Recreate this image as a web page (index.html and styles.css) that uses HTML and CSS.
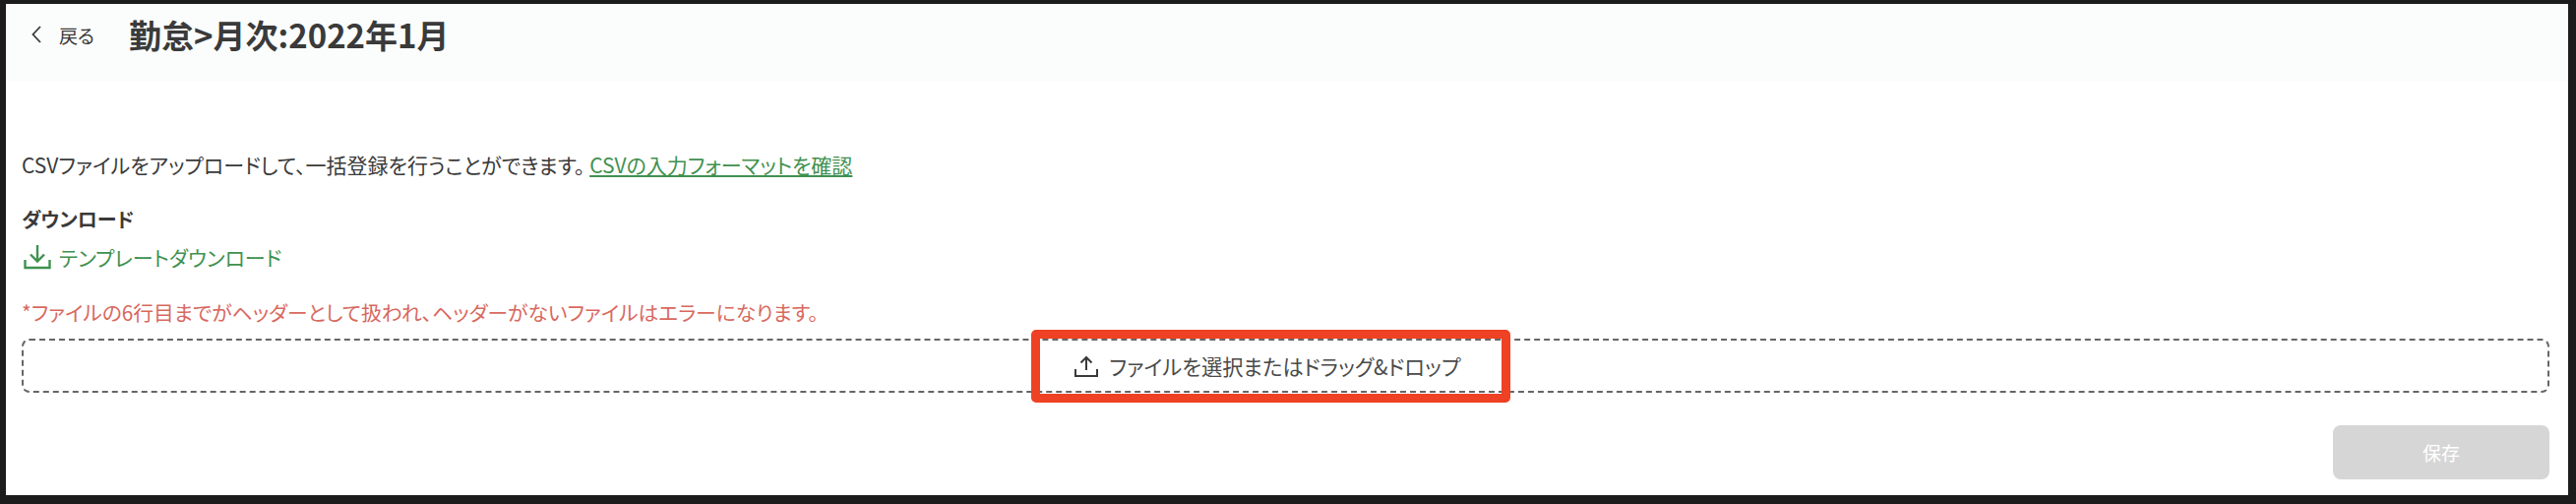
FILE: index.html
```html
<!DOCTYPE html>
<html lang="ja">
<head>
    <meta charset="UTF-8">
    <meta name="viewport" content="width=device-width, initial-scale=1.0">
    <title>勤怠&gt;月次:2022年1月</title>
    <link rel="stylesheet" href="styles.css">
</head>
<body>
    <div class="frame">
        <header class="page-header">
            <a class="back-link">
                <svg class="back-icon" viewBox="0 0 12 20" width="12" height="20" fill="none" stroke="#3a3a3a" stroke-width="1.8">
                    <path d="M10 2 L2.5 10 L10 18"/>
                </svg>
                <span>戻る</span>
            </a>
            <h1>勤怠&gt;月次:2022年1月</h1>
        </header>
        <main class="container">
            <p class="intro">CSVファイルをアップロードして、一括登録を行うことができます。<a class="format-link">CSVの入力フォーマットを確認</a></p>
            <h2>ダウンロード</h2>
            <a class="template-link">
                <svg viewBox="0 0 28 26" width="28" height="26" fill="none" stroke="#3f9150" stroke-width="2.4">
                    <path d="M14 1 V17"/>
                    <path d="M7 10.5 L14 17.5 L21 10.5"/>
                    <path d="M1.5 16 V24 H26.5 V16"/>
                </svg>
                <span>テンプレートダウンロード</span>
            </a>
            <p class="warning">*ファイルの6行目までがヘッダーとして扱われ、ヘッダーがないファイルはエラーになります。</p>
            <div class="dropzone">
                <svg viewBox="0 0 24 22" width="24" height="22" fill="none" stroke="#3a3a3a" stroke-width="2">
                    <path d="M12 15 V2"/>
                    <path d="M6.5 7.5 L12 2 L17.5 7.5"/>
                    <path d="M1 14 V21 H23 V14"/>
                </svg>
                <span>ファイルを選択またはドラッグ&amp;ドロップ</span>
                <div class="highlight"></div>
            </div>
            <div class="actions">
                <button type="button" disabled>保存</button>
            </div>
        </main>
    </div>
</body>
</html>
```

FILE: styles.css
```css
* {
    box-sizing: border-box;
}
html, body {
    margin: 0;
    padding: 0;
}
body {
    width: 2618px;
    height: 512px;
    overflow: hidden;
    padding: 4px 8px 9px 6px;
    background-color: #1c1c1c;
    font-family: "Noto Sans CJK JP", "Noto Sans", sans-serif;
    font-feature-settings: "palt";
    color: #3a3a3a;
}
.frame {
    height: 499px;
    background-color: #fff;
}
.page-header {
    display: flex;
    align-items: center;
    height: 79px;
    padding: 0 0 17px 25px;
    background-color: #fbfdfc;
}
.back-link {
    display: flex;
    align-items: center;
    gap: 17px;
    width: 100px;
    font-size: 19px;
}
h1 {
    margin: 0;
    font-size: 33px;
    line-height: 40px;
    font-weight: 700;
}
.container {
    padding: 70px 19px 0 16px;
}
.intro {
    margin: 0;
    font-size: 21px;
    line-height: 28px;
}
.format-link {
    margin-left: 5px;
    color: #3f9150;
    text-decoration: underline;
}
h2 {
    margin: 28px 0 0;
    font-size: 20px;
    line-height: 28px;
    font-weight: 700;
}
.template-link {
    display: flex;
    align-items: center;
    gap: 8px;
    height: 28px;
    margin-top: 10px;
    padding-left: 2px;
    font-size: 21px;
    color: #3f9150;
}
.warning {
    margin: 28px 0 0;
    font-size: 20.8px;
    line-height: 28px;
    color: #d8695f;
}
.dropzone {
    position: relative;
    display: flex;
    align-items: center;
    justify-content: center;
    gap: 11px;
    height: 55px;
    margin-top: 13px;
    padding-right: 36px;
    border: 2px dashed #666;
    border-radius: 8px;
    font-size: 21.3px;
    color: #4a4a4a;
}
.highlight {
    position: absolute;
    left: 1024px;
    top: -11px;
    width: 487px;
    height: 74px;
    border: 9px solid #ef4123;
    border-radius: 5px;
}
.actions {
    display: flex;
    justify-content: flex-end;
    margin-top: 33px;
}
button {
    width: 220px;
    height: 55px;
    border: none;
    border-radius: 8px;
    background-color: #d6d6d6;
    color: #fff;
    font-family: inherit;
    font-size: 19px;
}
```
